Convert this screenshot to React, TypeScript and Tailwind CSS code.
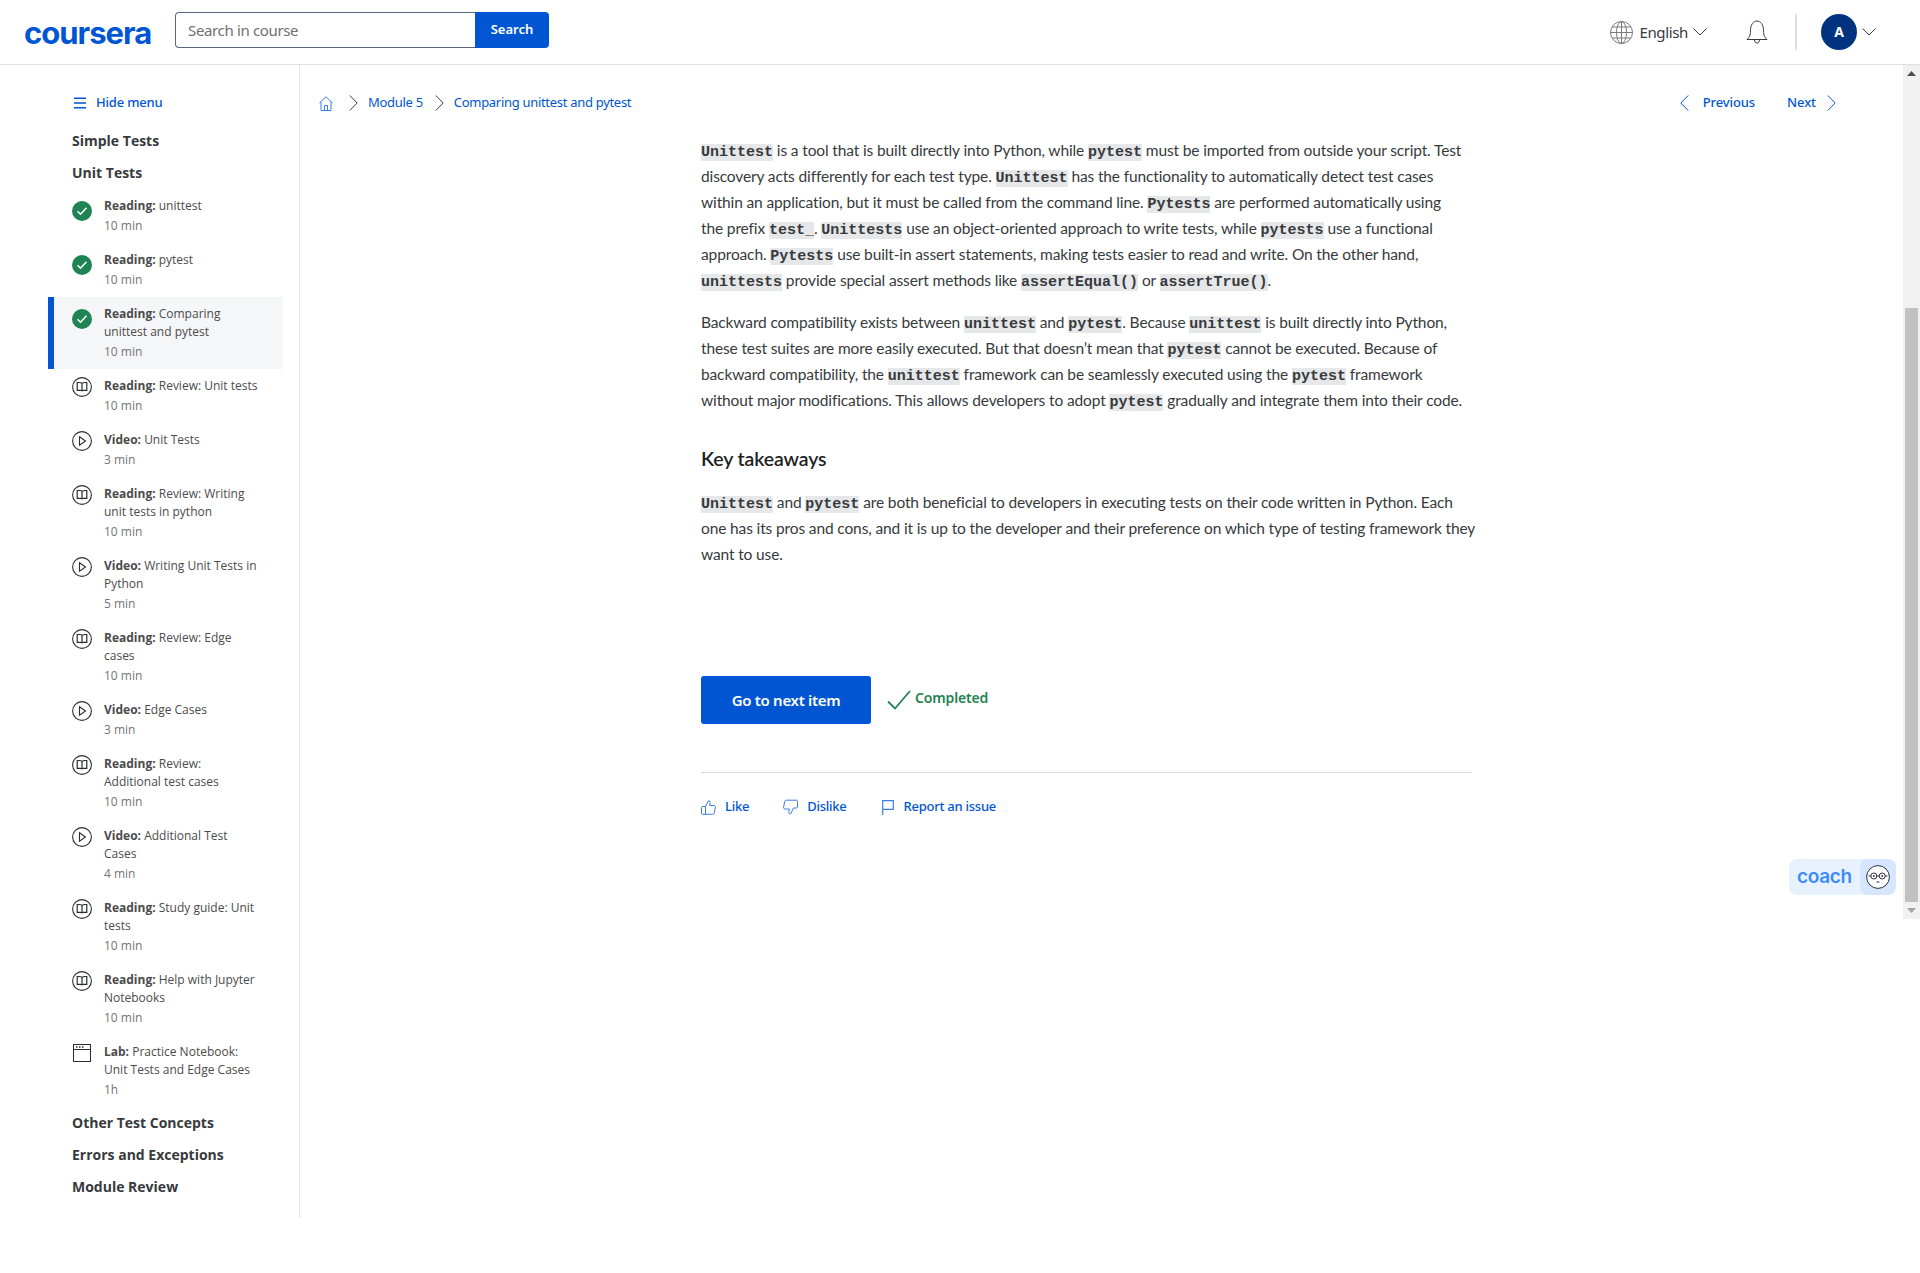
import React from 'react';

type Kind = 'done' | 'reading' | 'video' | 'lab';
type Item = { kind: Kind; label: string; title: string; time: string; active?: boolean };

const ITEMS: Item[] = [
  { kind: 'done', label: 'Reading:', title: 'unittest', time: '10 min' },
  { kind: 'done', label: 'Reading:', title: 'pytest', time: '10 min' },
  { kind: 'done', label: 'Reading:', title: 'Comparing unittest and pytest', time: '10 min', active: true },
  { kind: 'reading', label: 'Reading:', title: 'Review: Unit tests', time: '10 min' },
  { kind: 'video', label: 'Video:', title: 'Unit Tests', time: '3 min' },
  { kind: 'reading', label: 'Reading:', title: 'Review: Writing unit tests in python', time: '10 min' },
  { kind: 'video', label: 'Video:', title: 'Writing Unit Tests in Python', time: '5 min' },
  { kind: 'reading', label: 'Reading:', title: 'Review: Edge cases', time: '10 min' },
  { kind: 'video', label: 'Video:', title: 'Edge Cases', time: '3 min' },
  { kind: 'reading', label: 'Reading:', title: 'Review: Additional test cases', time: '10 min' },
  { kind: 'video', label: 'Video:', title: 'Additional Test Cases', time: '4 min' },
  { kind: 'reading', label: 'Reading:', title: 'Study guide: Unit tests', time: '10 min' },
  { kind: 'reading', label: 'Reading:', title: 'Help with Jupyter Notebooks', time: '10 min' },
  { kind: 'lab', label: 'Lab:', title: 'Practice Notebook: Unit Tests and Edge Cases', time: '1h' },
];

const ItemIcon = ({ kind }: { kind: Kind }) => {
  if (kind === 'done') {
    return (
      <svg className="mt-1" width="20" height="20" viewBox="0 0 20 20">
        <circle cx="10" cy="10" r="10" fill="#1f8354" />
        <path d="M5.5 10.2l3 3 6-6.4" fill="none" stroke="#fff" strokeWidth="1.5" />
      </svg>
    );
  }
  if (kind === 'reading') {
    return (
      <svg width="20" height="20" viewBox="0 0 20 20" fill="none" stroke="#2b2d2f" strokeWidth="1.1">
        <circle cx="10" cy="10" r="9.4" />
        <path d="M10 6.2c-1-.6-3-.8-4.800-.5v7.600h3.600c.6 0 1.200.3 1.200 1 0-.7.6-1 1.200-1h3.600V5.700c-1.800-.3-3.800-.1-4.800.5zM10 6.200v8" strokeWidth="1.200" />
      </svg>
    );
  }
  if (kind === 'video') {
    return (
      <svg width="20" height="20" viewBox="0 0 20 20" fill="none" stroke="#2b2d2f" strokeWidth="1.1">
        <circle cx="10" cy="10" r="9.4" />
        <path d="M7.500 5.800l6 4.200-6 4.200z" />
      </svg>
    );
  }
  return (
    <svg className="mt-px ml-px" width="18" height="18" viewBox="0 0 18 18" fill="none" stroke="#2b2d2f" strokeWidth="1">
      <rect x="0.5" y="0.5" width="17" height="17" />
      <path d="M0.500 5.500h17" />
      <path d="M3 3h1.500M6 3h1.500M9 3h1.500" strokeWidth="1.400" />
    </svg>
  );
};

const Chevron = ({ dir, w = 9, h = 16, color = '#373a3c' }: { dir: 'left' | 'right'; w?: number; h?: number; color?: string }) => (
  <svg width={w} height={h} viewBox="0 0 9 16" fill="none" stroke={color} strokeWidth="1" preserveAspectRatio="none">
    <path d={dir === 'right' ? 'M0.8 0.5L8.2 8 0.8 15.5' : 'M8.2 0.5L0.8 8l7.4 7.5'} />
  </svg>
);

const ChevronDown = () => (
  <svg width="14" height="8" viewBox="0 0 14 8" fill="none" stroke="#373a3c" strokeWidth="1">
    <path d="M0.5 0.5L7 7l6.5-6.5" />
  </svg>
);

const C = ({ children }: { children: React.ReactNode }) => (
  <code className="bg-[#e5e7e9] font-bold text-[15px] leading-none tracking-normal text-[#373a3c] font-['Liberation_Mono',monospace]">{children}</code>
);

const SectionTitle = ({ children }: { children: React.ReactNode }) => (
  <div className="h-8 pl-[72px] flex items-center text-sm font-bold text-[#373a3c] font-['Open_Sans',sans-serif]">{children}</div>
);

const Sidebar = () => (
  <aside className="w-[300px] h-[1153px] shrink-0 border-r border-[#e5e5e5] pt-[26px] font-['Open_Sans',sans-serif]">
    <div className="h-6 pl-[74px] flex items-center gap-[10px] text-[#0056d2] text-[13px] font-medium font-['Noto_Sans',sans-serif] tracking-[-0.2px]">
      <svg width="12" height="12" viewBox="0 0 12 12" fill="#0056d2">
        <path d="M0 0.5h12v1.6H0zM0 5.2h12v1.6H0zM0 9.9h12v1.6H0z" />
      </svg>
      Hide menu
    </div>
    <div className="h-[10px]" />
    <SectionTitle>Simple Tests</SectionTitle>
    <SectionTitle>Unit Tests</SectionTitle>
    <div className="w-[235px] ml-12">
      {ITEMS.map((item) => (
        <div
          key={item.title}
          className={`flex pt-2 pb-[7px] ${item.active ? 'bg-[#f5f6f8] border-l-[6px] border-[#0056d2] pl-[18px]' : 'pl-6'}`}
        >
          <div className="w-8 shrink-0">
            <ItemIcon kind={item.kind} />
          </div>
          <div className="w-[156px] text-xs text-[#4b4b4b]">
            <div className="leading-[18px]">
              <span className="font-bold">{item.label}</span> {item.title}
            </div>
            <div className="leading-5 mt-[1px] text-[#757575]">{item.time}</div>
          </div>
        </div>
      ))}
    </div>
    <SectionTitle>Other Test Concepts</SectionTitle>
    <SectionTitle>Errors and Exceptions</SectionTitle>
    <SectionTitle>Module Review</SectionTitle>
  </aside>
);

const Header = () => (
  <header className="h-[65px] border-b border-[#e1e1e1] flex items-center pl-6 pr-[44px] bg-white">
    <span className="w-[151px] text-[31px] leading-none font-bold tracking-[-1px] text-[#0056d2] font-['Inter',sans-serif]">coursera</span>
    <div className="flex h-9 w-[374px] mb-[4px]">
      <div className="flex-1 border border-[#5b6780] border-r-0 rounded-l-[4px] pl-3 flex items-center text-[15px] text-[#6f6f6f] font-['Noto_Sans',sans-serif] tracking-[-0.35px]">Search in course</div>
      <div className="w-[74px] bg-[#0056d2] rounded-r-[4px] flex items-center justify-center text-white text-[13px] font-semibold font-['Noto_Sans',sans-serif]">Search</div>
    </div>
    <div className="flex-1" />
    <svg width="23" height="23" viewBox="0 0 23 23" fill="none" stroke="#7a7a7a" strokeWidth="1">
      <circle cx="11.5" cy="11.5" r="11" />
      <ellipse cx="11.5" cy="11.5" rx="5" ry="11" />
      <path d="M11.5 0.5v22M2 6h19M0.5 11.5h22M2 17h19" />
    </svg>
    <span className="ml-[6px] text-[15px] text-[#373a3c] font-['Noto_Sans',sans-serif] tracking-[-0.35px]">English</span>
    <span className="ml-[5px]"><ChevronDown /></span>
    <svg className="ml-[39px]" width="22" height="24" viewBox="0 0 22 24" fill="none" stroke="#373a3c" strokeWidth="1">
      <path d="M1 19.5c2-2.200 3.500-3.500 3.500-9C4.500 4.500 7.500 1 11 1s6.500 3.500 6.500 9.500c0 5.500 1.500 6.800 3.500 9z" />
      <path d="M8.500 19.500c0 2.500 1.200 3.500 2.500 3.500s2.500-1 2.500-3.500" />
    </svg>
    <div className="ml-[27px] w-[2px] h-9 bg-[#dedede]" />
    <div className="ml-6 w-9 h-9 rounded-full bg-[#00337f] flex items-center justify-center text-white text-sm font-bold font-['Noto_Sans',sans-serif]">A</div>
    <span className="ml-[5px]"><ChevronDown /></span>
  </header>
);

const Main = () => (
  <main className="flex-1 min-w-0 text-[15.5px] tracking-[-0.13px] text-[#373a3c] font-['Lato',sans-serif]">
    <div className="h-[72px] pt-[4px] pl-[19px] pr-[67px] flex items-center text-[13px] text-[#0056d2] font-['Noto_Sans',sans-serif] tracking-[-0.3px]">
      <svg width="14" height="15" viewBox="0 0 14 15" fill="none" stroke="#3b7de0" strokeWidth="1">
        <path d="M0.5 7L7 0.8 13.500 7M2 6v8.500h10V6M5.500 14.500V9.500h3v5" />
      </svg>
      <span className="ml-4"><Chevron dir="right" /></span>
      <span className="ml-[10px]">Module 5</span>
      <span className="ml-3"><Chevron dir="right" /></span>
      <span className="ml-[10px]">Comparing unittest and pytest</span>
      <div className="flex-1" />
      <Chevron dir="left" color="#0056d2" />
      <span className="ml-[14px] font-medium tracking-[-0.1px]">Previous</span>
      <span className="ml-8 font-medium tracking-[-0.1px]">Next</span>
      <span className="ml-[11px]"><Chevron dir="right" color="#0056d2" /></span>
    </div>
    <div className="pl-[401px] w-[1173px]">
      <p className="leading-[26px] whitespace-nowrap">
        <C>Unittest</C> is a tool that is built directly into Python, while <C>pytest</C> must be imported from outside your script. Test<br />
        discovery acts differently for each test type. <C>Unittest</C> has the functionality to automatically detect test cases<br />
        within an application, but it must be called from the command line. <C>Pytests</C> are performed automatically using<br />
        the prefix <C>test_</C>. <C>Unittests</C> use an object-oriented approach to write tests, while <C>pytests</C> use a functional<br />
        approach. <C>Pytests</C> use built-in assert statements, making tests easier to read and write. On the other hand,<br />
        <C>unittests</C> provide special assert methods like <C>assertEqual()</C> or <C>assertTrue()</C>.
      </p>
      <p className="mt-4 leading-[26px] whitespace-nowrap">
        Backward compatibility exists between <C>unittest</C> and <C>pytest</C>. Because <C>unittest</C> is built directly into Python,<br />
        these test suites are more easily executed. But that doesn’t mean that <C>pytest</C> cannot be executed. Because of<br />
        backward compatibility, the <C>unittest</C> framework can be seamlessly executed using the <C>pytest</C> framework<br />
        without major modifications. This allows developers to adopt <C>pytest</C> gradually and integrate them into their code.
      </p>
      <h2 className="mt-8 mb-4 h-7 leading-7 text-[19.5px] font-semibold text-[#1f1f1f]">Key takeaways</h2>
      <p className="leading-[26px] whitespace-nowrap">
        <C>Unittest</C> and <C>pytest</C> are both beneficial to developers in executing tests on their code written in Python. Each<br />
        one has its pros and cons, and it is up to the developer and their preference on which type of testing framework they<br />
        want to use.
      </p>
      <div className="mt-[109px] flex items-center">
        <button className="w-[170px] h-12 bg-[#0056d2] rounded-[3px] text-white text-[15px] font-semibold font-['Noto_Sans',sans-serif] tracking-[-0.3px]">Go to next item</button>
        <svg className="ml-4" width="24" height="20" viewBox="0 0 24 20" fill="none" stroke="#1f8354" strokeWidth="1.8">
          <path d="M1 11.500L8 18.500 23 1" />
        </svg>
        <span className="ml-1 mb-1 text-sm font-semibold text-[#1f8354] font-['Noto_Sans',sans-serif] tracking-[-0.15px]">Completed</span>
      </div>
      <div className="mt-12 w-[771px] border-t border-[#dcdcdc]" />
      <div className="mt-6 h-5 flex items-center text-[13px] font-medium text-[#0056d2] font-['Noto_Sans',sans-serif] tracking-[-0.25px]">
        <svg width="15" height="15" viewBox="0 0 15 15" fill="none" stroke="#3b7de0" strokeWidth="1">
          <path d="M4.500 6.500L7.500 0.700c1.300 0 1.800 1 1.600 2.200L8.700 5.500h4.300c1 0 1.600.8 1.400 1.700l-1.100 5.800c-.2.800-.7 1.300-1.500 1.300H1.500c-.6 0-1-.4-1-1V7.500c0-.6.400-1 1-1zM4.500 6.500v7.800" />
        </svg>
        <span className="ml-[9px]">Like</span>
        <svg className="ml-[34px]" width="15" height="16" viewBox="0 0 15 16" fill="none" stroke="#3b7de0" strokeWidth="1">
          <path d="M10.500 9L7.500 15c-1.300 0-1.800-1-1.600-2.200L6.300 10H2c-1 0-1.600-.8-1.400-1.700L1.700 2.500C1.900 1.700 2.400 1.200 3.200 1.200h10.300c.6 0 1 .4 1 1V8c0 .6-.4 1-1 1z" />
        </svg>
        <span className="ml-[9px]">Dislike</span>
        <svg className="ml-[35px]" width="12" height="15" viewBox="0 0 12 15" fill="none" stroke="#3b7de0" strokeWidth="1.2">
          <path d="M0.700 15V0.700h10.600v8.600H0.700" />
        </svg>
        <span className="ml-[10px]">Report an issue</span>
      </div>
    </div>
  </main>
);

const Scrollbar = () => (
  <div className="w-[17px] h-[854px] shrink-0 bg-[#f1f1f1] flex flex-col items-center">
    <div className="h-[17px] flex items-center justify-center">
      <svg width="9" height="5" viewBox="0 0 9 5" fill="#505050"><path d="M4.500 0L9 5H0z" /></svg>
    </div>
    <div className="h-[226px]" />
    <div className="w-[13px] flex-1 bg-[#c1c1c1]" />
    <div className="h-[17px] flex items-center justify-center">
      <svg width="9" height="5" viewBox="0 0 9 5" fill="#a3a3a3"><path d="M0 0h9L4.500 5z" /></svg>
    </div>
  </div>
);

const CoachButton = () => (
  <div className="absolute left-[1789px] top-[859px] w-[107px] h-9 flex rounded-[8px] overflow-hidden bg-[#e8f1fe]">
    <div className="flex-1 flex items-center pl-[8px] text-[19px] font-semibold text-[#3d8bfb] font-['Inter',sans-serif] tracking-[-0.3px]">coach</div>
    <div className="w-9 bg-[#d6e6ff] rounded-l-[8px] flex items-center justify-center">
      <svg width="24" height="24" viewBox="0 0 24 24" fill="#fff" stroke="#2b2f38" strokeWidth="1">
        <circle cx="12" cy="12" r="11.400" />
        <circle cx="7.800" cy="11" r="3" fill="none" />
        <circle cx="16.200" cy="11" r="3" fill="none" />
        <path d="M10.800 11h2.400M4.800 11H2.500M19.200 11h2.300" fill="none" />
        <circle cx="7.800" cy="11" r="0.900" fill="#2b2f38" stroke="none" />
        <circle cx="16.200" cy="11" r="0.900" fill="#2b2f38" stroke="none" />
        <path d="M10.500 17h3" fill="none" />
      </svg>
    </div>
  </div>
);

const App: React.FC = () => (
  <div className="relative min-h-[1273px] bg-white overflow-hidden">
    <Header />
    <div className="flex items-start">
      <Sidebar />
      <Main />
      <Scrollbar />
    </div>
    <CoachButton />
  </div>
);

export default App;
